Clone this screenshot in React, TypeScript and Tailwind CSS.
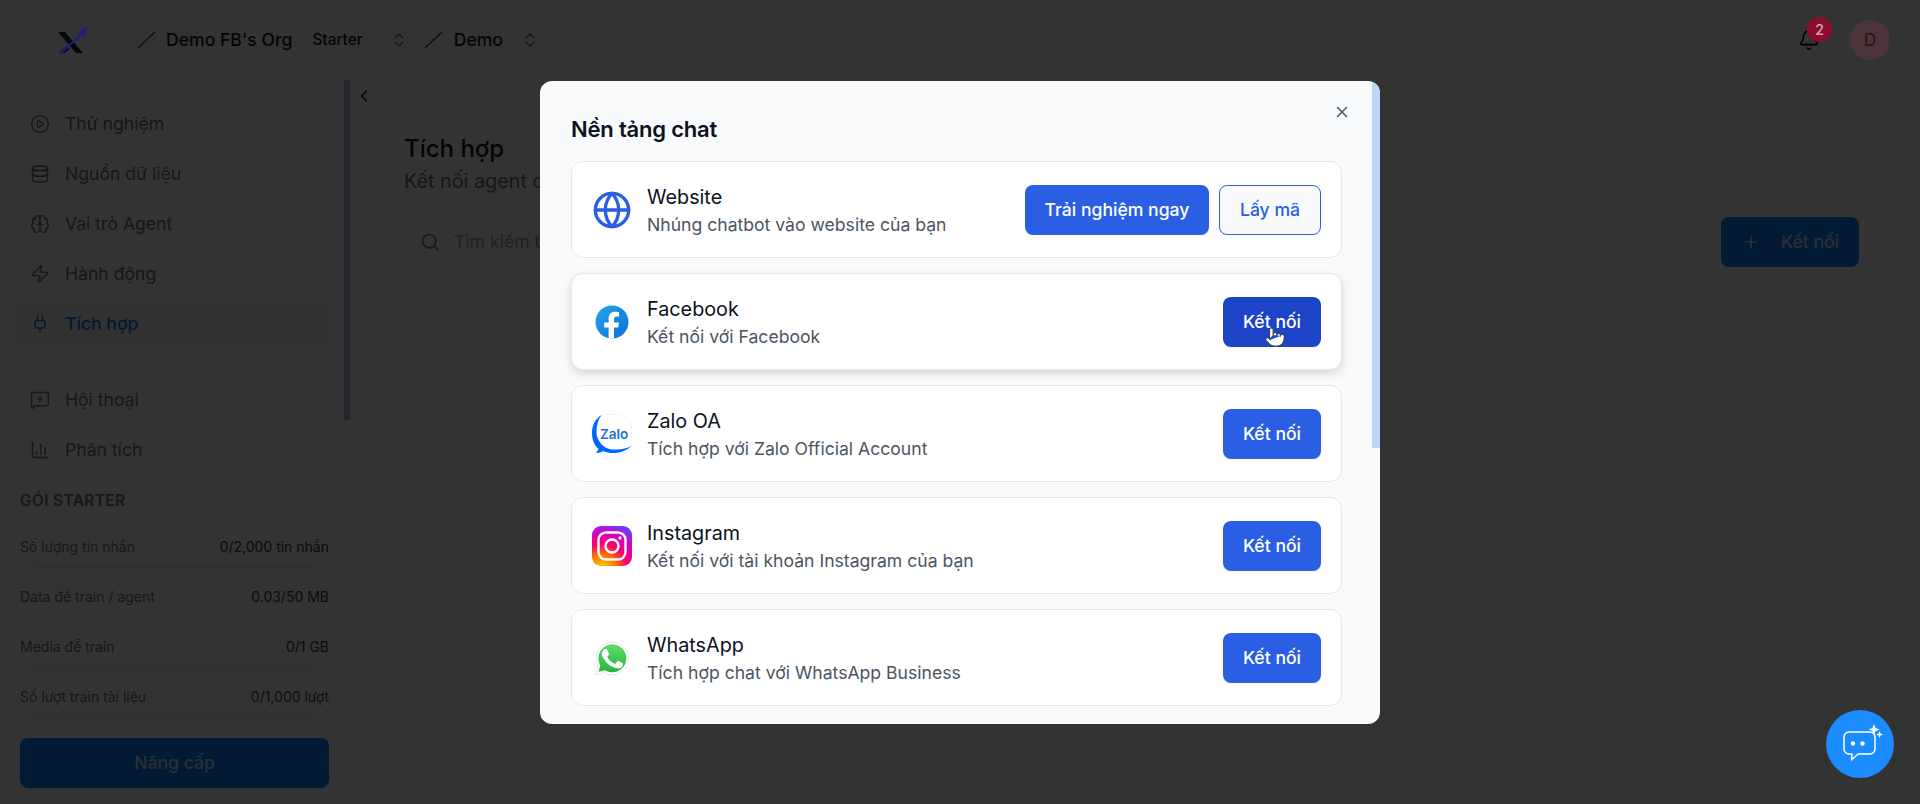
import type { ReactNode } from "react";
import {
  Bell,
  Brain,
  ChartColumn,
  ChevronLeft,
  ChevronsUpDown,
  CirclePlay,
  Database,
  Globe,
  MessageSquarePlus,
  Plug,
  Plus,
  Pointer,
  Search,
  X,
  Zap,
} from "lucide-react";

const navTop = [
  { label: "Thử nghiệm", icon: CirclePlay },
  { label: "Nguồn dữ liệu", icon: Database },
  { label: "Vai trò Agent", icon: Brain },
  { label: "Hành động", icon: Zap },
  { label: "Tích hợp", icon: Plug, active: true },
];

const navBottom = [
  { label: "Hội thoại", icon: MessageSquarePlus },
  { label: "Phân tích", icon: ChartColumn },
];

const usage = [
  { label: "Số lượng tin nhắn", value: "0/2,000 tin nhắn" },
  { label: "Data để train / agent", value: "0.03/50 MB" },
  { label: "Media để train", value: "0/1 GB" },
  { label: "Số lượt train tài liệu", value: "0/1,000 lượt" },
];

const FacebookIcon = () => (
  <svg width="40" height="40" viewBox="0 0 40 40">
    <defs>
      <linearGradient id="fb" x1="0" y1="0" x2="1" y2="1">
        <stop offset="0" stopColor="#2aa4f4" />
        <stop offset="1" stopColor="#0a6fd1" />
      </linearGradient>
      <clipPath id="fbClip">
        <circle cx="20" cy="20" r="16.5" />
      </clipPath>
    </defs>
    <circle cx="20" cy="20" r="16.5" fill="url(#fb)" />
    <path
      clipPath="url(#fbClip)"
      fill="#fff"
      d="M26.2 25.4l.8-5h-5v-3.300c0-1.400.7-2.700 2.900-2.700h2.200V10.100s-2-.3-3.900-.3c-4 0-6.600 2.400-6.600 6.700v3.900h-4.400v5h4.400v12h5.400v-12z"
    />
  </svg>
);

const ZaloIcon = () => (
  <svg width="40" height="40" viewBox="0 0 40 40">
    <rect x="1" y="0.500" width="38" height="39" rx="11" fill="#fff" stroke="#f1f5f9" />
    <path
      fill="#0068ff"
      d="M9.500 1C3.500 5 0 11 0 19c0 7 2.500 12.500 6.500 16-.4 1.500-1.500 2.800-3 3.700 2.800.4 5.800-.4 7.800-1.700 4.200 2 9 2.500 14 1.700 5-.8 10-2.500 14-6.700-4 2-9 3.500-15 3.600-6 .1-10-1-13-3.600C7 28 4.500 23 4.500 18 4.500 11.500 6 6 9.500 1z"
    />
    <text x="8" y="24.500" fontFamily="Inter, sans-serif" fontWeight="600" fontSize="13.500" fill="#1b6fe0">
      Zalo
    </text>
  </svg>
);

const InstagramIcon = () => (
  <svg width="40" height="40" viewBox="0 0 40 40">
    <defs>
      <radialGradient id="igA" cx="0.25" cy="1.08" r="1.15">
        <stop offset="0" stopColor="#ffd600" />
        <stop offset="0.3" stopColor="#ff7a00" />
        <stop offset="0.55" stopColor="#ff0069" />
        <stop offset="0.8" stopColor="#d300c5" />
        <stop offset="1" stopColor="#7638fa" />
      </radialGradient>
    </defs>
    <rect width="40" height="40" rx="9" fill="url(#igA)" />
    <rect x="6.500" y="6.500" width="27" height="27" rx="7.500" fill="none" stroke="#fff" strokeWidth="2.400" />
    <circle cx="20" cy="20" r="6.500" fill="none" stroke="#fff" strokeWidth="2.400" />
    <circle cx="28" cy="12" r="1.700" fill="#fff" />
  </svg>
);

const WhatsAppIcon = () => (
  <svg width="40" height="40" viewBox="0 0 40 40">
    <defs>
      <linearGradient id="wa" x1="0" y1="0" x2="0" y2="1">
        <stop offset="0" stopColor="#5fdc6b" />
        <stop offset="1" stopColor="#27b43e" />
      </linearGradient>
    </defs>
    <path
      fill="#fff"
      stroke="#e5e7eb"
      d="M3.500 37l2.400-8.800A16.300 16.300 0 1 1 12 34.500z"
    />
    <path fill="url(#wa)" d="M6.500 33.800l1.800-6.400A14 14 0 1 1 13 32.200z" />
    <path
      fill="#fff"
      d="M15.300 11.900c-.4-.9-.8-.9-1.200-.9h-1c-.4 0-.9.100-1.400.7-.5.500-1.800 1.800-1.800 4.300s1.900 5 2.100 5.300c.3.300 3.600 5.700 8.900 7.800 4.400 1.700 5.300 1.400 6.200 1.300 1-.1 3.100-1.300 3.500-2.500.4-1.200.4-2.300.3-2.500-.1-.2-.5-.3-1-.6-.5-.3-3.100-1.500-3.500-1.700-.5-.2-.8-.3-1.200.3-.3.500-1.300 1.700-1.600 2-.3.300-.6.400-1.100.1-.5-.3-2.200-.8-4.200-2.600-1.500-1.400-2.600-3.100-2.900-3.600-.3-.5 0-.8.200-1.100.2-.2.500-.6.800-.9.200-.3.300-.5.500-.9.200-.3.100-.6 0-.9-.2-.2-1.100-2.700-1.600-3.600z"
    />
  </svg>
);

const Logo = () => (
  <svg width="30" height="28" viewBox="0 0 30 28" className="relative z-50">
    <path d="M0 6h7l18 21h-7z" fill="#08080c" />
    <path d="M8 20.500l3.500 3L6 27H1z" fill="#08080c" />
    <path d="M1 27.500L21.500 8.500l-2.500-2.500L30 0l-3 11-2.500-2.500L4 27.500z" fill="#1d1f78" />
  </svg>
);

const Slash = () => (
  <svg width="20" height="20" viewBox="0 0 20 20" className="shrink-0 text-gray-700">
    <path d="M2 18L19 2" stroke="currentColor" strokeWidth="1.500" />
  </svg>
);

const ConnectButton = ({ hover }: { hover?: boolean }) => (
  <button
    type="button"
    className={`relative h-[50px] w-[98px] rounded-lg text-[17.600px] font-medium text-white ${
      hover ? "bg-[#1d43c9]" : "bg-[#2a5fe4]"
    }`}
  >
    Kết nối
    {hover ? (
      <Pointer
        size={22}
        fill="#fff"
        strokeWidth={1.2}
        className="absolute left-[41px] top-[29px] text-gray-700"
      />
    ) : null}
  </button>
);

const ChatCard = ({
  icon,
  title,
  desc,
  hover,
  children,
}: {
  icon: ReactNode;
  title: string;
  desc: string;
  hover?: boolean;
  children: ReactNode;
}) => (
  <div
    className={`flex h-[97px] items-center justify-between rounded-xl border border-[#e5e7eb] bg-white px-5 pt-[2px] ${
      hover ? "shadow-[0_4px_10px_rgba(0,0,0,0.14)]" : ""
    }`}
  >
    <div className="flex items-center gap-[15px]">
      <div className="flex h-10 w-10 items-center justify-center">{icon}</div>
      <div>
        <div className="text-[19.800px] leading-7 font-normal text-[#0b1220]">{title}</div>
        <div className="mt-0.5 text-[17.600px] leading-6 text-[#4b5563]">{desc}</div>
      </div>
    </div>
    {children}
  </div>
);

export default function App() {
  return (
    <div className="relative h-[804px] w-[1920px] overflow-hidden bg-white font-[Inter,sans-serif]">
      <header className="flex h-20 items-center pl-[58px] pr-[30px]">
        <Logo />
        <div className="ml-[48px] flex items-center">
          <Slash />
          <span className="ml-2.5 text-[17.600px] font-medium text-gray-900">Demo FB's Org</span>
          <span className="ml-[11px] rounded-md border border-gray-100 px-2 py-1 text-[15.400px] font-medium text-gray-900">
            Starter
          </span>
          <ChevronsUpDown size={18} className="ml-[18px] text-gray-500" />
          <div className="ml-[15px]">
            <Slash />
          </div>
          <span className="ml-[11px] text-[17.600px] font-medium text-gray-900">Demo</span>
          <ChevronsUpDown size={18} className="ml-[18px] text-gray-500" />
        </div>
        <div className="relative z-50 ml-auto flex items-center gap-[30px]">
          <div className="relative">
            <Bell size={22} strokeWidth={1.75} className="text-black" />
            <span className="absolute -right-[12px] -top-[12px] flex h-[25px] w-[25px] items-center justify-center rounded-full bg-[#8a0d2e] text-sm font-semibold text-[#c9a0aa]">
              2
            </span>
          </div>
          <div className="flex h-10 w-10 items-center justify-center rounded-full bg-[#4c343a] text-[17.600px] text-[#241418]">
            D
          </div>
        </div>
      </header>

      <div className="flex h-[724px]">
        <aside className="relative flex w-[350px] shrink-0 flex-col">
          <nav className="flex flex-col gap-2.5 pl-4 pr-[23px] pt-6">
            {navTop.map((item) => (
              <div
                key={item.label}
                className={`flex h-10 items-center gap-[15px] rounded-lg px-[14px] text-[17.600px] ${
                  item.active ? "bg-gray-100 font-medium text-[#0a7ce8]" : "text-gray-500"
                }`}
              >
                <item.icon size={20} strokeWidth={1.75} />
                {item.label}
              </div>
            ))}
          </nav>
          <div className="mx-4 mr-[23px] mt-[18px] border-t border-gray-100" />
          <nav className="flex flex-col gap-2.5 pl-4 pr-[23px] pt-[17px]">
            {navBottom.map((item) => (
              <div key={item.label} className="flex h-10 items-center gap-[15px] rounded-lg px-[14px] text-[17.600px] text-gray-500">
                <item.icon size={20} strokeWidth={1.75} />
                {item.label}
              </div>
            ))}
          </nav>
          <div className="pl-5 pr-[21px] pt-[19px]">
            <div className="text-[15.400px] font-semibold tracking-wide text-gray-500">GÓI STARTER</div>
            <div className="mt-[25px] flex flex-col gap-[19px]">
              {usage.map((row) => (
                <div key={row.label}>
                  <div className="flex items-center justify-between text-[14px] leading-5">
                    <span className="text-gray-500">{row.label}</span>
                    <span className="text-gray-700">{row.value}</span>
                  </div>
                  <div className="mx-3 mt-2 h-[3px] rounded-full bg-gray-100" />
                </div>
              ))}
            </div>
          </div>
          <button
            type="button"
            className="mx-5 mr-[21px] mt-auto mb-4 h-[50px] rounded-lg bg-[#0a84ff] text-[17.600px] font-medium text-white/80"
          >
            Nâng cấp
          </button>
          <div className="absolute right-0 top-0 h-[340px] w-[6px] bg-[#a9bcd2]" />
        </aside>

        <button type="button" className="flex h-[45px] w-[28px] shrink-0 items-start justify-center pt-1.5 text-gray-900">
          <ChevronLeft size={20} />
        </button>

        <main className="mb-8 mr-8 flex-1 border-b border-gray-100 pl-[26px]">
          <h1 className="mt-[53px] text-2xl leading-8 font-medium text-gray-900">Tích hợp</h1>
          <p className="mt-0.5 text-[19.800px] leading-7 text-gray-500">Kết nối agent của bạn với các nền tảng</p>
          <div className="mt-[22px] flex items-center justify-between pr-[29px]">
            <div className="flex h-[46px] w-[420px] items-center gap-[14px] rounded-lg border border-gray-100 pl-[15px] text-[17.600px] text-gray-400">
              <Search size={20} className="text-gray-500" />
              Tìm kiếm tích hợp
            </div>
            <button
              type="button"
              className="flex h-[50px] w-[138px] items-center gap-[20px] rounded-lg bg-[#0a84ff] pl-5 text-[17.600px] font-medium text-white/80"
            >
              <Plus size={20} />
              Kết nối
            </button>
          </div>
        </main>
      </div>

      <div className="fixed inset-0 z-40 flex items-center justify-center bg-black/80">
        <div className="relative z-50 h-[643px] w-[840px] overflow-hidden rounded-xl bg-[#f8fafc] pl-[31px] pr-[38px] pt-[34px]">
          <h2 className="text-[22px] leading-7 font-semibold tracking-[-0.2px] text-[#0b1220]">Nền tảng chat</h2>
          <X size={18} className="absolute right-[29px] top-[22px] text-gray-600" />
          <div className="mt-[18px] flex flex-col gap-[15px]">
            <ChatCard
              icon={<Globe size={40} strokeWidth={2} className="text-[#2a5fe4]" />}
              title="Website"
              desc="Nhúng chatbot vào website của bạn"
            >
              <div className="flex gap-2.5">
                <button type="button" className="h-[50px] w-[184px] rounded-lg bg-[#2a5fe4] text-[17.600px] font-medium text-white">
                  Trải nghiệm ngay
                </button>
                <button
                  type="button"
                  className="h-[50px] w-[102px] rounded-lg border border-[#2a5fe4] bg-[#f8fafc] text-[17.600px] font-medium text-[#2a5fe4]"
                >
                  Lấy mã
                </button>
              </div>
            </ChatCard>
            <ChatCard icon={<FacebookIcon />} title="Facebook" desc="Kết nối với Facebook" hover>
              <ConnectButton hover />
            </ChatCard>
            <ChatCard icon={<ZaloIcon />} title="Zalo OA" desc="Tích hợp với Zalo Official Account">
              <ConnectButton />
            </ChatCard>
            <ChatCard icon={<InstagramIcon />} title="Instagram" desc="Kết nối với tài khoản Instagram của bạn">
              <ConnectButton />
            </ChatCard>
            <ChatCard icon={<WhatsAppIcon />} title="WhatsApp" desc="Tích hợp chat với WhatsApp Business">
              <ConnectButton />
            </ChatCard>
          </div>
          <div className="absolute right-0 top-0 h-[367px] w-2 rounded-tr-xl bg-[#bcd7f7]" />
        </div>
      </div>

      <div className="fixed bottom-[26px] right-[26px] z-50 flex h-[68px] w-[68px] items-center justify-center rounded-full bg-[#1a8cff]">
        <svg width="68" height="68" viewBox="0 0 68 68" fill="none">
          <path
            d="M23 22h21a5 5 0 0 1 5 5v12a5 5 0 0 1-5 5H32l-6.500 6 .5-6h-3a5 5 0 0 1-5-5V27a5 5 0 0 1 5-5z"
            stroke="#fff"
            strokeWidth="1.500"
            strokeLinejoin="round"
          />
          <circle cx="27" cy="33.500" r="2.200" fill="#fff" />
          <circle cx="36.500" cy="33.500" r="2.200" fill="#fff" />
          <path d="M48 14l1.600 3.900 3.900 1.600-3.900 1.600L48 25l-1.600-3.900-3.900-1.600 3.900-1.600z" fill="#fff" />
          <path d="M53.500 21l1 2.500 2.500 1-2.500 1-1 2.500-1-2.500-2.500-1 2.500-1z" fill="#fff" />
        </svg>
      </div>
    </div>
  );
}
